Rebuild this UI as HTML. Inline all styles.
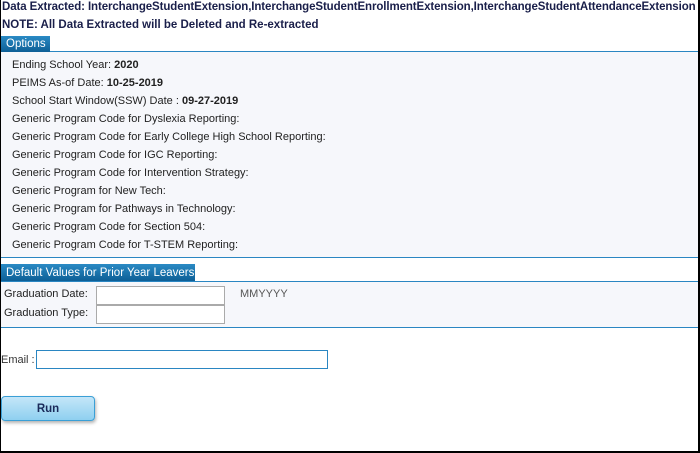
<!DOCTYPE html>
<html><head><style>
body{margin:0;width:700px;height:453px;overflow:hidden;background:#fff;font-family:"Liberation Sans",sans-serif;}
.frame{position:absolute;left:0;top:0;border-right:2px solid #000;border-bottom:2px solid #000;border-left:1px solid #000;box-sizing:border-box;width:700px;height:453px;}
.t{position:absolute;white-space:nowrap;color:#222;font-size:11px;}
.b{font-weight:bold;color:#1a1f4a;font-size:11.5px;}
.tab{position:absolute;background:linear-gradient(#2a8ac4,#0d5f96);color:#fff;font-size:11.5px;padding-left:5px;box-sizing:border-box;}
.line{position:absolute;left:0;width:698px;height:1px;background:#2a86c2;}
.panel{position:absolute;left:1px;width:697px;background:#f6f7fb;}
.inp{position:absolute;background:#fff;border:1px solid #aaa;box-sizing:border-box;}
</style></head><body>
<div class="t b" style="left:2px;top:1px;letter-spacing:-0.1px">Data Extracted: InterchangeStudentExtension,InterchangeStudentEnrollmentExtension,InterchangeStudentAttendanceExtension</div>
<div class="t b" style="left:2px;top:19px">NOTE: All Data Extracted will be Deleted and Re-extracted</div>
<div class="panel" style="top:52px;height:205px"></div>
<div class="line" style="top:51px"></div>
<div class="tab" style="left:1px;top:36px;width:49px;height:16px;line-height:17px">Options</div>
<div class="t" style="left:12px;top:59px">Ending School Year: <b>2020</b></div>
<div class="t" style="left:12px;top:77px">PEIMS As-of Date: <b>10-25-2019</b></div>
<div class="t" style="left:12px;top:95px">School Start Window(SSW) Date : <b>09-27-2019</b></div>
<div class="t" style="left:12px;top:113px">Generic Program Code for Dyslexia Reporting:</div>
<div class="t" style="left:12px;top:131px">Generic Program Code for Early College High School Reporting:</div>
<div class="t" style="left:12px;top:149px">Generic Program Code for IGC Reporting:</div>
<div class="t" style="left:12px;top:167px">Generic Program Code for Intervention Strategy:</div>
<div class="t" style="left:12px;top:185px">Generic Program for New Tech:</div>
<div class="t" style="left:12px;top:203px">Generic Program for Pathways in Technology:</div>
<div class="t" style="left:12px;top:221px">Generic Program Code for Section 504:</div>
<div class="t" style="left:12px;top:239px">Generic Program Code for T-STEM Reporting:</div>
<div class="line" style="top:257px"></div>
<div class="panel" style="top:282px;height:45px"></div>
<div class="line" style="top:281px"></div>
<div class="tab" style="left:1px;top:264px;width:194px;height:17px;line-height:18px">Default Values for Prior Year Leavers</div>
<div class="t" style="left:4px;top:288px">Graduation Date:</div>
<div class="t" style="left:4px;top:307px">Graduation Type:</div>
<div class="inp" style="left:96px;top:286px;width:129px;height:19px"></div>
<div class="inp" style="left:96px;top:305px;width:129px;height:19px"></div>
<div class="t" style="left:240px;top:288px;color:#555">MMYYYY</div>
<div class="line" style="top:327px"></div>
<div class="t" style="left:1px;top:354px;color:#333">Email :</div>
<div class="inp" style="left:36px;top:350px;width:292px;height:19px;border:1px solid #2a86c2"></div>
<div style="position:absolute;left:1px;top:396px;width:94px;height:25px;box-sizing:border-box;border:1px solid #3a9fd6;border-radius:4px;background:linear-gradient(#c4e6f8,#8fd0f0);box-shadow:1px 2px 3px rgba(0,0,0,.3);text-align:center;line-height:25px;font-weight:bold;font-size:11.5px;color:#1a2a5a">Run</div>
<div class="frame"></div>
</body></html>
